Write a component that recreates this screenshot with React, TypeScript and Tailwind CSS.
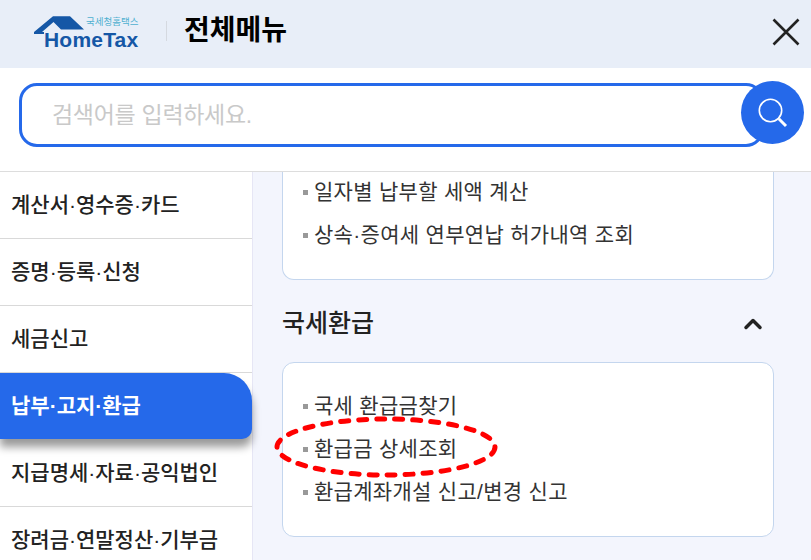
import { ChevronUp } from 'lucide-react';

const MENUS = ['계산서·영수증·카드', '증명·등록·신청', '세금신고', '납부·고지·환급', '지급명세·자료·공익법인', '장려금·연말정산·기부금'];

function Bullet({ label }: { label: string }) {
  return (
    <li className="flex h-[43px] items-center text-[21px] tracking-[0.3px] text-[#333]">
      <span className="mr-[6px] mt-[1px] h-[5px] w-[5px] bg-[#999]" />
      {label}
    </li>
  );
}

function Logo() {
  return (
    <div className="relative h-[36px] w-[108px] shrink-0">
      <svg className="absolute left-0 top-0" width="108" height="36" viewBox="0 0 108 36">
        <path d="M0 18 L19 2.3 L36 2.3 L50 15.5 L27 15.5 L19.5 8 L8 18 L10 18 L10 20 L0 20 Z" fill="#1557a6" />
      </svg>
      <span className="absolute left-[52px] top-[3px] whitespace-nowrap text-[9.5px] leading-[10px] text-[#4fb0d0]">국세청홈택스</span>
      <span className="absolute left-[10px] top-[15px] whitespace-nowrap font-['Liberation_Sans',sans-serif] text-[21px] font-bold leading-[21px] tracking-[0.2px] text-[#1557a6]">HomeTax</span>
    </div>
  );
}

export default function App() {
  return (
    <div className="flex h-[560px] w-[811px] flex-col overflow-hidden bg-white font-['Liberation_Sans','Noto_Sans_CJK_KR',sans-serif]">
      <header className="flex h-[68px] shrink-0 items-center bg-[#e8eef8] pl-[34px] pr-[11px]">
        <div className="mt-[-4px]"><Logo /></div>
        <div className="ml-[24px] h-[20px] w-px bg-[#d5d9e0] mt-[-6px]" />
        <h1 className="ml-[17px] mt-[-6px] text-[28px] font-bold leading-none text-black">전체메뉴</h1>
        <svg className="ml-auto mt-[-4px]" width="28" height="28" viewBox="0 0 28 28" fill="none" stroke="#222" strokeWidth="2.6">
          <path d="M1.5 1.5 L26.5 26.5 M26.5 1.5 L1.5 26.5" />
        </svg>
      </header>

      <div className="flex h-[104px] shrink-0 items-start border-b border-[#ddd] pl-[19px] pt-[15px]">
        <div className="flex h-[64px] w-[745px] shrink-0 items-center rounded-[18px] border-[3px] border-[#2569ea] bg-white pl-[30px] text-[23px] tracking-[-0.3px] text-[#c9c9c9]">
          검색어를 입력하세요.
        </div>
        <button className="ml-[-23px] mt-[-2px] flex h-[63px] w-[63px] shrink-0 items-center justify-center rounded-full bg-[#2569ea]">
          <svg width="32" height="32" viewBox="0 0 32 32" fill="none" stroke="#fff">
            <circle cx="13.5" cy="13.5" r="11.2" strokeWidth="1.6" />
            <path d="M21.8 21.8 L29 29" strokeWidth="3" />
          </svg>
        </button>
      </div>

      <div className="flex min-h-0 flex-1">
        <nav className="w-[253px] shrink-0 border-r border-[#e6e6f5] bg-white">
          {MENUS.map((m) =>
            m === '납부·고지·환급' ? (
              <div
                key={m}
                className="relative mb-px flex h-[66px] w-[252px] items-center rounded-tr-[28px] rounded-br-[10px] bg-[#2569ea] pl-[11px] text-[21px] font-bold text-white shadow-[0_8px_8px_rgba(0,0,0,0.4)]"
              >
                {m}
              </div>
            ) : (
              <div key={m} className="flex h-[67px] items-center border-b border-[#d9d9d9] pl-[11px] text-[21px] font-medium text-[#222]">
                {m}
              </div>
            ),
          )}
        </nav>

        <main className="min-w-0 flex-1 bg-[#f3f5fd] pl-[29px] pr-[37px]">
          <div className="flex h-[108px] flex-col rounded-b-[12px] border border-t-0 border-[#c4d6ee] bg-white pl-[20px]">
            <ul className="mt-[-2px]">
              <Bullet label="일자별 납부할 세액 계산" />
              <Bullet label="상속·증여세 연부연납 허가내역 조회" />
            </ul>
          </div>
          <div className="flex h-[82px] items-center justify-between pr-[7px] pt-[5px]">
            <h2 className="text-[25px] font-medium text-[#222]">국세환급</h2>
            <ChevronUp size={28} strokeWidth={3} className="text-[#222]" />
          </div>
          <div className="relative h-[175px] rounded-[12px] border border-[#c4d6ee] bg-white pl-[20px] pt-[21px]">
            <ul>
              <Bullet label="국세 환급금찾기" />
              <Bullet label="환급금 상세조회" />
              <Bullet label="환급계좌개설 신고/변경 신고" />
            </ul>
            <svg className="absolute left-[-10px] top-[51px]" width="226" height="66" viewBox="0 0 226 66" fill="none">
              <ellipse cx="113" cy="33" rx="109" ry="28" stroke="#f00" strokeWidth="5" strokeLinecap="round" strokeDasharray="8 10" />
            </svg>
          </div>
        </main>
      </div>
    </div>
  );
}
